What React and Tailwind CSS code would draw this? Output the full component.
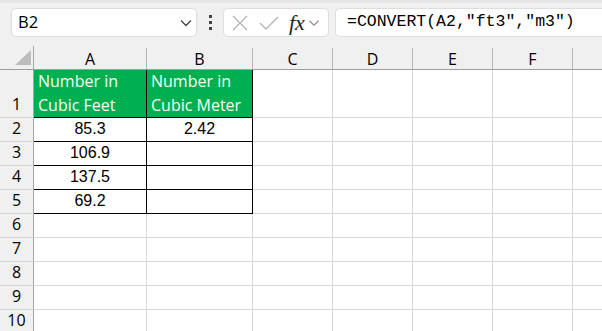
import React from "react";

const cols = ["A", "B", "C", "D", "E", "F", ""];
const rowsData = [
  { n: 1, h: "h-[48px]" },
  { n: 2 }, { n: 3 }, { n: 4 }, { n: 5 }, { n: 6 }, { n: 7 }, { n: 8 }, { n: 9 }, { n: 10 },
];
const aVals = { 2: "85.3", 3: "106.9", 4: "137.5", 5: "69.2" };

function Chevron({ className }) {
  return (
    <svg className={className} width="12" height="8" viewBox="0 0 12 8" fill="none">
      <path d="M1 1.5 L6 6.5 L11 1.5" stroke="#444" strokeWidth="1.3" />
    </svg>
  );
}

export default function App() {
  const colW = ["w-[34px]", "w-[113px]", "w-[106px]", "w-[80px]", "w-[80px]", "w-[80px]", "w-[80px]", "flex-1"];
  return (
    <div className="w-[602px] h-[331px] overflow-hidden bg-white" style={{ fontFamily: "'Liberation Sans', Arial, sans-serif" }}>
      {/* toolbar */}
      <div className="h-[46px] bg-[#f0f0f0] border-t-[3px] border-[#e6e6e6] flex items-start pt-[5px] pl-[11px]">
        <div className="w-[186px] h-[29px] bg-white border border-[#dedede] rounded-[5px] flex items-center justify-between pl-[6px] pr-[4px]">
          <span className="text-[16.5px] text-black" style={{ fontFamily: "'Open Sans', sans-serif" }}>B2</span>
          <Chevron className="" />
        </div>
        <div className="w-[26px] h-[29px] flex flex-col items-center justify-center gap-[3px]">
          <div className="w-[3px] h-[3px] bg-[#444]" />
          <div className="w-[3px] h-[3px] bg-[#444]" />
          <div className="w-[3px] h-[3px] bg-[#444]" />
        </div>
        <div className="w-[106px] h-[29px] bg-white border border-[#dedede] rounded-[5px] flex items-center pl-[5px]">
          <svg width="20" height="20" viewBox="0 0 20 20" className="ml-[1px]">
            <path d="M3 3 L17 17 M17 3 L3 17" stroke="#b5b5b5" strokeWidth="1.4" />
          </svg>
          <svg width="22" height="20" viewBox="0 0 22 20" className="ml-[8px]">
            <path d="M2 10 L8 16 L20 4" stroke="#b5b5b5" strokeWidth="1.4" fill="none" />
          </svg>
          <span className="ml-[9px] text-[22px] italic text-[#222] leading-none" style={{ fontFamily: "'Liberation Serif', 'Times New Roman', serif" }}>fx</span>
          <Chevron className="ml-[3px] scale-90 opacity-60" />
        </div>
        <div className="ml-[6px] flex-1 h-[29px] bg-white border border-[#dedede] rounded-l-[5px] border-r-0 flex items-center pl-[11px]">
          <span className="text-[16.5px] text-black" style={{ fontFamily: "'Liberation Mono', 'Courier New', monospace" }}>=CONVERT(A2,"ft3","m3")</span>
        </div>
      </div>

      {/* column header row */}
      <div className="flex h-[24px] bg-[#f0f0f0] border-b border-[#9e9e9e]">
        <div className={`${colW[0]} shrink-0 border-r border-[#a8a8a8] relative`}>
          <svg width="18" height="16" viewBox="0 0 18 16" className="absolute left-[14px] top-[4px]">
            <path d="M17 0 L17 15 L1 15 Z" fill="#bdbdbd" />
          </svg>
        </div>
        {cols.map((c, i) => (
          <div
            key={i}
            className={`${colW[i + 1]} shrink-0 flex items-center justify-center text-[16px] text-black ${i < 6 ? "border-r border-[#b5b5b5] mt-[2px]" : ""}`}
            style={{ fontFamily: "'Open Sans', sans-serif" }}
          >
            {c}
          </div>
        ))}
      </div>

      {/* rows */}
      {rowsData.map((r) => {
        const h = r.h || "h-[24px]";
        const tableBottom = r.n <= 5;
        return (
          <div key={r.n} className={`flex ${h}`}>
            <div
              className={`${colW[0]} shrink-0 bg-[#f0f0f0] border-r border-[#a8a8a8] border-b border-b-[#d6d6d6] flex items-end justify-center pb-[1px] text-[16px] text-black`}
              style={{ fontFamily: "'Open Sans', sans-serif" }}
            >
              {r.n}
            </div>
            {/* A */}
            <div
              className={`${colW[1]} shrink-0 border-r border-b ${
                tableBottom ? "border-black" : "border-[#d9d9d9]"
              } ${r.n === 1 ? "bg-[#00b050] text-white" : "text-black"} flex ${
                r.n === 1 ? "items-end justify-start pl-[4px]" : "items-end justify-center pb-[2px]"
              }`}
            >
              {r.n === 1 ? (
                <div className="text-[16px] leading-[24px] text-[#f4fff8]" style={{ fontFamily: "'Open Sans', sans-serif" }}>
                  Number in
                  <br />
                  Cubic Feet
                </div>
              ) : (
                <span className="text-[16px] leading-[20px]">{aVals[r.n] || ""}</span>
              )}
            </div>
            {/* B */}
            <div
              className={`${colW[2]} shrink-0 border-r border-b ${
                tableBottom ? "border-black" : "border-[#d9d9d9]"
              } ${r.n === 1 ? "bg-[#00b050]" : ""} flex ${
                r.n === 1 ? "items-end justify-start pl-[4px]" : "items-end justify-center pb-[2px]"
              }`}
            >
              {r.n === 1 ? (
                <div className="text-[16px] leading-[24px] text-[#f4fff8]" style={{ fontFamily: "'Open Sans', sans-serif" }}>
                  Number in
                  <br />
                  Cubic Meter
                </div>
              ) : (
                <span className="text-[16px] leading-[20px] text-black">{r.n === 2 ? "2.42" : ""}</span>
              )}
            </div>
            {[3, 4, 5, 6].map((ci) => (
              <div key={ci} className={`${colW[ci]} shrink-0 border-r border-b border-[#d9d9d9]`} />
            ))}
            <div className="flex-1 border-b border-[#d9d9d9]" />
          </div>
        );
      })}
    </div>
  );
}
